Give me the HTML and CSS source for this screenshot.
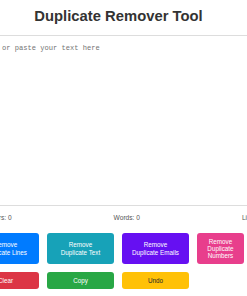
FILE: index.html
```html
<!DOCTYPE html>
<html lang="en">
<head>
  <meta charset="UTF-8">
  <meta name="viewport" content="width=device-width, initial-scale=1.0">
  <title>Duplicate Remover Tool</title>
  <link rel="stylesheet" href="styles.css">
</head>
<body>
  <div id="tool">
    <h1>Duplicate Remover Tool</h1>

    <!--invoer-->
    <textarea id="tekstInvoer" placeholder="Type or paste your text here"></textarea>

    <div class="stats">
      <span>Characters: 0</span>
      <span>Words: 0</span>
      <span>Lines: 0</span>
    </div>

    <div class="knoppen">
      <button class="knop blauw">Remove Duplicate Lines</button>
      <button class="knop teal">Remove Duplicate Text</button>
      <button class="knop paars">Remove Duplicate Emails</button>
      <button class="knop roze">Remove Duplicate Numbers</button>
      <button class="knop rood">Clear</button>
      <button class="knop groen">Copy</button>
      <button class="knop geel">Undo</button>
    </div>
  </div>
</body>
</html>
```

FILE: styles.css
```css
    body {
      margin: 0;
      font-family: "Liberation Sans", Arial, sans-serif;
      background: #fff;
      color: #333;
      overflow: hidden;
    }

    #tool {
      width: 293px;
      margin-left: -28px;
    }

    h1 {
      font-size: 14.8px;
      line-height: 17px;
      font-weight: bold;
      text-align: center;
      color: #333;
      margin: 7.6px 0 10.4px;
    }

    textarea {
      display: block;
      width: 100%;
      height: 171px;
      box-sizing: border-box;
      padding: 7.6px;
      border: 1px solid #ddd;
      border-radius: 4px;
      font-family: "Liberation Mono", "Courier New", monospace;
      font-size: 7.1px;
      resize: none;
    }

    textarea::placeholder {
      color: #757575;
    }

    .stats {
      display: flex;
      justify-content: space-between;
      margin-top: 8px;
      font-size: 6.6px;
      line-height: 8px;
      color: #555;
    }

    .knoppen {
      display: grid;
      grid-template-columns: 67px 67px 67px 47px;
      gap: 8px;
      margin-top: 11px;
    }

    .knop {
      border: none;
      border-radius: 3px;
      padding: 4.8px 9px;
      font-family: "Liberation Sans", Arial, sans-serif;
      font-size: 6.3px;
      line-height: 7.2px;
      color: #fff;
      text-align: center;
      cursor: pointer;
    }

    .blauw { background-color: #007bff; }
    .teal { background-color: #17a2b8; }
    .paars { background-color: #6610f2; }
    .roze { background-color: #e83e8c; }
    .rood { background-color: #dc3545; }
    .groen { background-color: #28a745; }

    .geel {
      background-color: #ffc107;
      color: #212529;
    }
```
